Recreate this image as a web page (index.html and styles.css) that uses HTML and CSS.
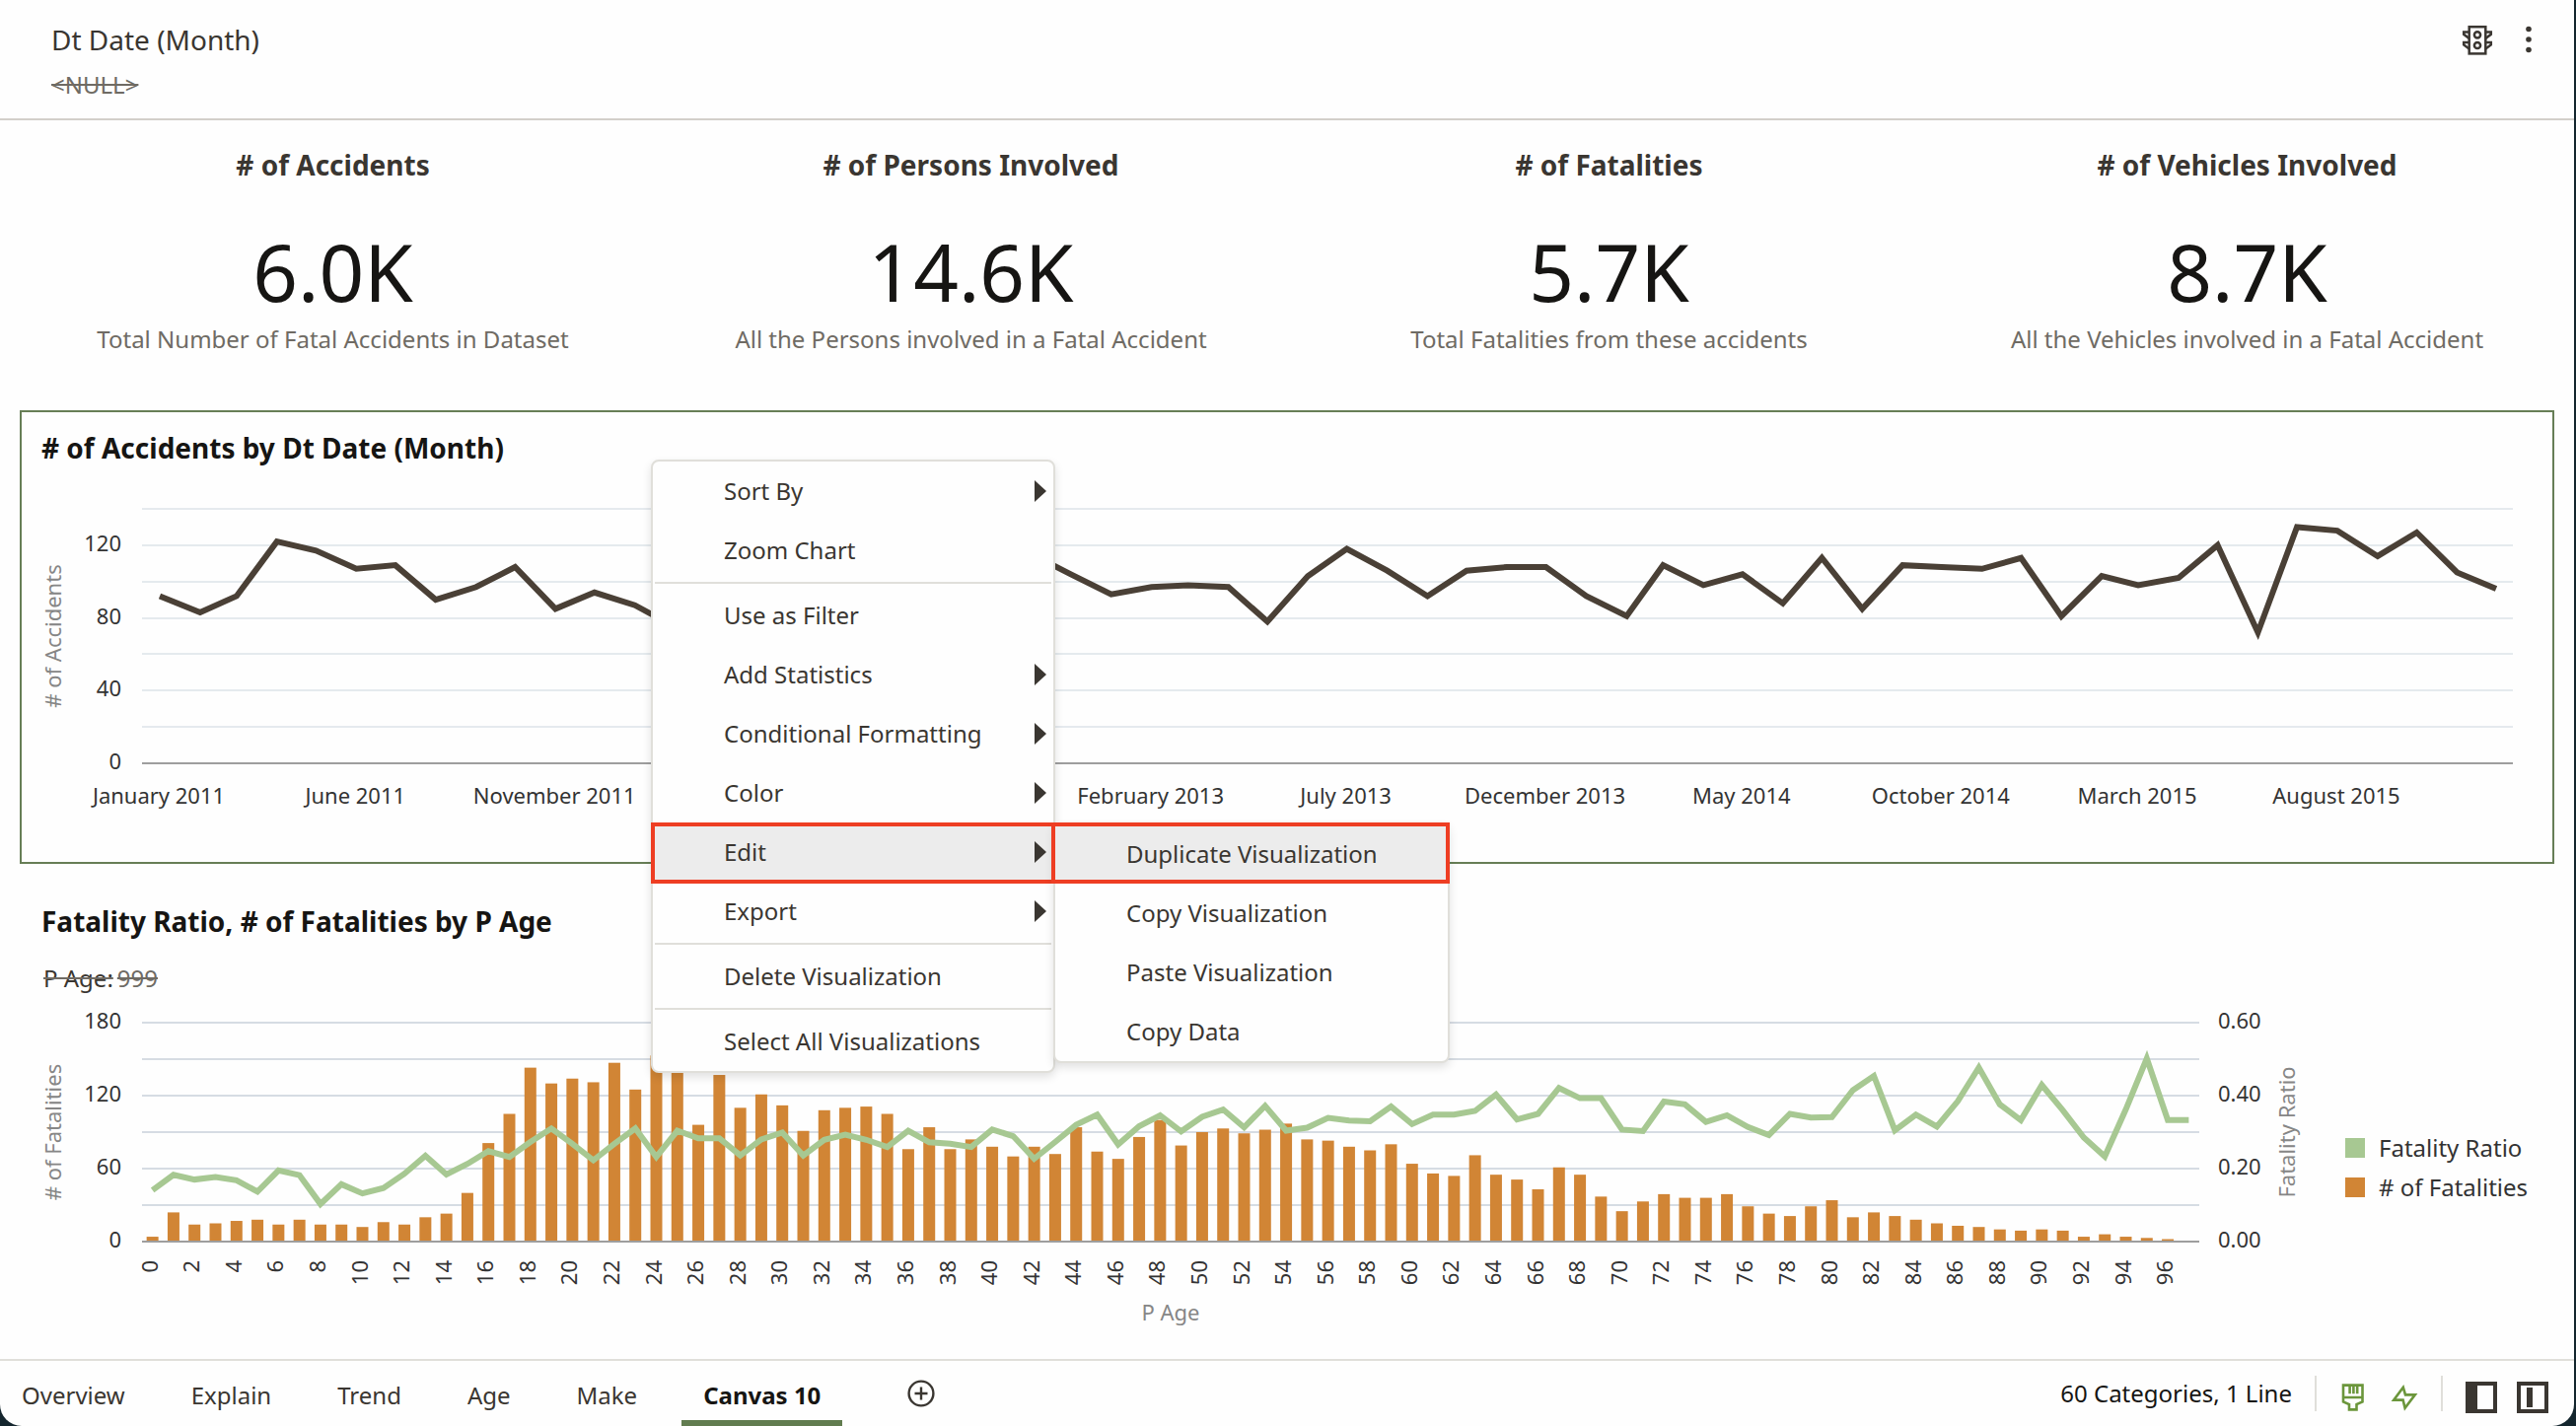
FILE: index.html
```html
<!DOCTYPE html>
<html lang="en">
<head>
<meta charset="utf-8">
<meta name="viewport" content="width=device-width, initial-scale=1">
<title>Fatal Accidents - Canvas 10</title>
<link rel="stylesheet" href="styles.css">
</head>
<body>
<div class="window">
  <header class="filter-bar">
    <div class="filter">
      <div class="filter-name">Dt Date (Month)</div>
      <div class="filter-value">&lt;NULL&gt;</div>
    </div>
    <div class="filter-actions">
      <button class="icon-button" type="button" aria-label="Limit values">
        <svg width="32" height="32" viewBox="0 0 32 32" fill="none" stroke="#3a3631" stroke-width="2.5">
          <rect x="7.7" y="3.2" width="16.6" height="27.2"/>
          <circle cx="16" cy="11.3" r="3.1"/>
          <circle cx="16" cy="22" r="3.1"/>
          <path d="M7.7 8.4H2.2v2.4l5.5 4.2M7.7 19H2.2v2.4l5.5 4.2M24.3 8.4h5.5v2.4l-5.5 4.2M24.3 19h5.5v2.4l-5.5 4.2"/>
        </svg>
      </button>
      <button class="icon-button" type="button" aria-label="Menu">
        <svg width="32" height="32" viewBox="0 0 32 32" fill="#3a3631">
          <circle cx="16" cy="5.5" r="2.8"/><circle cx="16" cy="16" r="2.8"/><circle cx="16" cy="26.5" r="2.8"/>
        </svg>
      </button>
    </div>
  </header>

  <main class="canvas">
    <section class="tiles">
      <article class="tile">
        <h2 class="tile-title"># of Accidents</h2>
        <div class="tile-value">6.0K</div>
        <p class="tile-note">Total Number of Fatal Accidents in Dataset</p>
      </article>
      <article class="tile">
        <h2 class="tile-title"># of Persons Involved</h2>
        <div class="tile-value">14.6K</div>
        <p class="tile-note">All the Persons involved in a Fatal Accident</p>
      </article>
      <article class="tile">
        <h2 class="tile-title"># of Fatalities</h2>
        <div class="tile-value">5.7K</div>
        <p class="tile-note">Total Fatalities from these accidents</p>
      </article>
      <article class="tile">
        <h2 class="tile-title"># of Vehicles Involved</h2>
        <div class="tile-value">8.7K</div>
        <p class="tile-note">All the Vehicles involved in a Fatal Accident</p>
      </article>
    </section>

    <section class="viz viz-selected">
      <h2 class="viz-title"># of Accidents by Dt Date (Month)</h2>
      <svg class="chart chart-accidents" id="accidents" role="img" aria-label="# of Accidents by Dt Date (Month)"></svg>
    </section>

    <section class="viz">
      <h2 class="viz-title">Fatality Ratio, # of Fatalities by P Age</h2>
      <div class="viz-filter"><span class="viz-filter-name">P Age:</span><span class="viz-filter-value">999</span></div>
      <div class="viz-body">
        <svg class="chart chart-fatalities" id="fatalities" role="img" aria-label="Fatality Ratio, # of Fatalities by P Age"></svg>
        <ul class="legend">
          <li class="legend-item"><span class="swatch swatch-ratio"></span>Fatality Ratio</li>
          <li class="legend-item"><span class="swatch swatch-count"></span># of Fatalities</li>
        </ul>
      </div>
    </section>
  </main>

  <footer class="status-bar">
    <nav class="tabs">
      <a class="tab" href="#overview">Overview</a>
      <a class="tab" href="#explain">Explain</a>
      <a class="tab" href="#trend">Trend</a>
      <a class="tab" href="#age">Age</a>
      <a class="tab" href="#make">Make</a>
      <a class="tab tab-active" href="#canvas10" aria-current="page">Canvas 10</a>
    </nav>
    <button class="icon-button add-canvas" type="button" aria-label="Add canvas">
      <svg width="28" height="28" viewBox="0 0 28 28" fill="none" stroke="#3a3631" stroke-width="2.4">
        <circle cx="14" cy="14" r="12.4"/><path d="M14 7.5v13M7.5 14h13"/>
      </svg>
    </button>
    <div class="status">
      <span class="status-text">60 Categories, 1 Line</span>
      <span class="divider"></span>
      <div class="status-icons status-icons-wide">
        <button class="icon-button" type="button" aria-label="Brushing">
          <svg width="28" height="28" viewBox="0 0 28 28" fill="none" stroke="#6b963b" stroke-width="2.6">
            <path d="M4 1.6h19.5v16.8l-6 2.6v5.4h-7.5v-5.4l-6-2.6zM4 14h19.5M10.6 1.6v8.6M14.4 1.6v8.6M18.2 1.6v8.6"/>
          </svg>
        </button>
        <button class="icon-button" type="button" aria-label="Auto apply data">
          <svg width="28" height="28" viewBox="0 0 28 28" fill="none" stroke="#6b963b" stroke-width="2.6" stroke-miterlimit="10">
            <path d="M12.8 3.8L3.2 16.6h9.4l2 8.2L24.8 11.4H15z"/>
          </svg>
        </button>
      </div>
      <span class="divider"></span>
      <div class="status-icons">
        <button class="icon-button" type="button" aria-label="Toggle data panel">
          <svg width="32" height="32" viewBox="0 0 32 32"><rect width="32" height="32" fill="#3a3631"/><rect x="12" y="4" width="16" height="24" fill="#fefefe"/></svg>
        </button>
        <button class="icon-button" type="button" aria-label="Toggle grammar panel">
          <svg width="32" height="32" viewBox="0 0 32 32"><rect width="32" height="32" fill="#3a3631"/><rect x="4" y="4" width="24" height="24" fill="#fefefe"/><rect x="10" y="6" width="6" height="20" fill="#3a3631"/></svg>
        </button>
      </div>
    </div>
  </footer>
</div>

<div class="menu context-menu" role="menu">
  <button class="menu-item has-submenu" type="button" role="menuitem">Sort By</button>
  <button class="menu-item" type="button" role="menuitem">Zoom Chart</button>
  <hr class="menu-separator">
  <button class="menu-item" type="button" role="menuitem">Use as Filter</button>
  <button class="menu-item has-submenu" type="button" role="menuitem">Add Statistics</button>
  <button class="menu-item has-submenu" type="button" role="menuitem">Conditional Formatting</button>
  <button class="menu-item has-submenu" type="button" role="menuitem">Color</button>
  <div class="menu-group">
    <button class="menu-item has-submenu is-active" type="button" role="menuitem" aria-expanded="true">Edit</button>
    <div class="menu submenu" role="menu">
      <button class="menu-item is-active" type="button" role="menuitem">Duplicate Visualization</button>
      <button class="menu-item" type="button" role="menuitem">Copy Visualization</button>
      <button class="menu-item" type="button" role="menuitem">Paste Visualization</button>
      <button class="menu-item" type="button" role="menuitem">Copy Data</button>
    </div>
  </div>
  <button class="menu-item has-submenu" type="button" role="menuitem">Export</button>
  <hr class="menu-separator">
  <button class="menu-item" type="button" role="menuitem">Delete Visualization</button>
  <hr class="menu-separator">
  <button class="menu-item" type="button" role="menuitem">Select All Visualizations</button>
</div>
<script src="charts.js"></script>
</body>
</html>
```
FILE: styles.css
```css
* {
  box-sizing: border-box;
}

body {
  margin: 0;
  background: #14262e;
  color: #3a3631;
  font-family: "Noto Sans", "Open Sans", sans-serif;
  font-size: 24px;
  line-height: 32px;
}

h2,
p,
ul {
  margin: 0;
  padding: 0;
}

.window {
  display: flex;
  flex-direction: column;
  min-height: 100vh;
  margin-right: 2px;
  overflow: hidden;
  border-radius: 0 0 22px 22px;
  background: #fefefe;
}

.icon-button {
  display: block;
  padding: 0;
  border: 0;
  background: none;
}

.icon-button svg {
  display: block;
}

/* Filter bar */

.filter-bar {
  display: flex;
  justify-content: space-between;
  padding: 22px 30px 18px 52px;
  border-bottom: 2px solid #d3cfca;
}

.filter {
  display: flex;
  flex-direction: column;
  gap: 12px;
}

.filter-name {
  font-size: 28px;
  line-height: 36px;
}

.filter-value {
  color: #6f6b64;
  text-decoration: line-through;
}

.filter-actions {
  display: flex;
  align-items: flex-start;
  gap: 20px;
  padding-top: 2px;
}

/* Canvas */

.canvas {
  flex: 1;
}

.tiles {
  display: grid;
  grid-template-columns: repeat(4, 1fr);
  padding: 27px 8px 56px 14px;
  text-align: center;
}

.tile-title {
  font-size: 28px;
  line-height: 36px;
}

.tile-value {
  margin-top: 42px;
  color: #161513;
  font-size: 80px;
  line-height: 96px;
}

.tile-note {
  margin-top: 5px;
  color: #6f6b64;
}

.viz {
  margin: 0 20px;
  padding-top: 38px;
  border: 2px solid transparent;
}

.viz-selected {
  padding-top: 18px;
  border-color: #677e56;
}

.viz-title {
  padding: 0 20px;
  color: #161513;
  font-size: 28px;
  line-height: 36px;
}

.viz-filter {
  display: flex;
  gap: 4px;
  margin-top: 24px;
  padding: 0 22px;
}

.viz-filter-name {
  text-decoration: line-through #6f6b64;
}

.viz-filter-value {
  color: #6f6b64;
  text-decoration: line-through;
}

.viz-body {
  display: flex;
  align-items: center;
  gap: 28px;
  padding-right: 22px;
}

/* Charts */

.chart {
  display: block;
  flex: 1;
  width: 100%;
  min-width: 0;
  font-size: 22px;
}

.chart-accidents {
  height: 402px;
}

.chart-fatalities {
  height: 352px;
}

.chart-accidents .grid {
  stroke: #e5eaee;
}

.chart-fatalities .grid {
  stroke: #d6dce3;
}

.grid,
.axis {
  stroke-width: 2;
}

.axis {
  stroke: #9e9e9e;
}

.tick {
  fill: #333333;
}

.axis-title {
  fill: #868686;
}

.series {
  fill: none;
  stroke-width: 6;
}

.series-accidents {
  stroke: #4a4036;
}

.series-ratio {
  stroke: #a7c892;
}

.bar {
  fill: #d18535;
}

.legend {
  flex: 0 0 188px;
  list-style: none;
  color: #333333;
}

.legend-item {
  display: flex;
  align-items: center;
  gap: 14px;
  line-height: 40px;
  white-space: nowrap;
}

.swatch {
  width: 20px;
  height: 20px;
}

.swatch-ratio {
  background: #a7c892;
}

.swatch-count {
  background: #d18535;
}

/* Status bar */

.status-bar {
  display: flex;
  align-items: center;
  height: 68px;
  padding-right: 26px;
  border-top: 2px solid #e0dfda;
}

.tabs {
  display: flex;
  align-self: stretch;
  gap: 23px;
}

.tab {
  padding: 19px 22px 0;
  border-bottom: 6px solid transparent;
  color: #3a3631;
  text-decoration: none;
}

.tab-active {
  border-bottom-color: #617c4f;
  color: #161513;
  font-weight: 700;
}

.add-canvas {
  margin-left: 66px;
}

.status {
  display: flex;
  align-items: center;
  gap: 23px;
  margin-left: auto;
  color: #161513;
}

.divider {
  width: 2px;
  height: 36px;
  background: #e0dfda;
}

.status-icons {
  display: flex;
  gap: 20px;
  padding-top: 8px;
}

.status-icons-wide {
  gap: 24px;
}

/* Context menu */

.menu {
  position: absolute;
  border: 2px solid #e0dfda;
  border-radius: 8px;
  background: #fefefe;
  box-shadow: 0 4px 10px rgba(0, 0, 0, 0.12);
}

.context-menu {
  top: 466px;
  left: 660px;
  width: 410px;
}

.menu-group {
  position: relative;
}

.submenu {
  top: 0;
  left: 100%;
  width: 402px;
}

.menu-item {
  position: relative;
  display: flex;
  align-items: center;
  justify-content: space-between;
  width: 100%;
  height: 60px;
  padding: 0 7px 0 72px;
  border: 0;
  background: none;
  color: #3a3631;
  font: inherit;
  text-align: left;
}

.has-submenu::after {
  border: solid transparent;
  border-width: 11px 0 11px 12px;
  border-left-color: #3a3631;
  content: "";
}

.menu-separator {
  height: 2px;
  margin: 2px;
  border: 0;
  background: #e0dfda;
}

.is-active {
  background: #ececec;
}

.is-active::before {
  position: absolute;
  inset: 0 -2px -2px;
  border: 4px solid #ee3e23;
  content: "";
}

.submenu .is-active::before {
  inset: -2px -2px 0 -4px;
}
```
FILE: charts.js
```js
const SVG_NS = "http://www.w3.org/2000/svg";

const accidents = [
  92, 83, 92, 122, 117, 107, 109, 90, 97, 108, 85, 94,
  87, 75, 88, 95, 104, 110, 102, 98, 105, 112, 115, 104,
  93, 97, 98, 97, 78, 103, 118, 106, 92, 106, 108, 108,
  92, 81, 109, 98, 104, 88, 113, 85, 109, 108, 107, 113,
  81, 103, 98, 102, 120, 72, 130, 128, 114, 127, 105, 96
];

const fatalities = [
  4, 24, 14, 15, 17, 18, 14, 18, 14, 14, 12, 16, 14, 20, 23, 40, 81, 105, 143, 130,
  134, 131, 147, 125, 153, 142, 96, 137, 110, 121, 112, 91, 108, 110, 111, 105, 76, 94, 76, 84,
  78, 70, 78, 72, 94, 74, 68, 86, 100, 79, 90, 93, 89, 92, 97, 84, 83, 78, 75, 80,
  64, 56, 54, 71, 55, 51, 43, 61, 55, 37, 25, 33, 39, 36, 36, 39, 29, 23, 21, 29,
  34, 20, 24, 21, 18, 15, 13, 12, 10, 9, 10, 9, 4, 6, 4, 3, 2, 0
];

const ratio = [
  0.141, 0.183, 0.170, 0.177, 0.168, 0.137, 0.195, 0.182, 0.103, 0.157,
  0.132, 0.147, 0.186, 0.235, 0.184, 0.213, 0.248, 0.232, 0.273, 0.310,
  0.268, 0.223, 0.268, 0.310, 0.232, 0.304, 0.283, 0.283, 0.236, 0.280,
  0.299, 0.236, 0.279, 0.293, 0.279, 0.259, 0.304, 0.272, 0.268, 0.259,
  0.307, 0.289, 0.227, 0.273, 0.320, 0.348, 0.266, 0.316, 0.346, 0.302,
  0.342, 0.362, 0.313, 0.372, 0.304, 0.312, 0.339, 0.332, 0.330, 0.370,
  0.322, 0.348, 0.348, 0.358, 0.403, 0.335, 0.350, 0.421, 0.393, 0.393,
  0.307, 0.303, 0.384, 0.376, 0.328, 0.346, 0.314, 0.292, 0.350, 0.340,
  0.341, 0.415, 0.454, 0.305, 0.348, 0.315, 0.385, 0.477, 0.376, 0.333,
  0.429, 0.360, 0.285, 0.233, 0.362, 0.502, 0.333, 0.333
];

// Month index (from January 2011) of each label on the date axis
const dateLabels = [
  [0, "January 2011"], [5, "June 2011"], [10, "November 2011"],
  [25, "February 2013"], [30, "July 2013"], [35, "December 2013"],
  [40, "May 2014"], [45, "October 2014"], [50, "March 2015"], [55, "August 2015"]
];

function add(parent, name, attributes, text) {
  const node = document.createElementNS(SVG_NS, name);
  for (const key in attributes) node.setAttribute(key, attributes[key]);
  if (text !== undefined) node.textContent = text;
  parent.appendChild(node);
}

function line(svg, x1, x2, y, cls) {
  add(svg, "line", { x1: x1, x2: x2, y1: y, y2: y, class: cls });
}

function verticalText(svg, x, y, anchor, cls, text) {
  add(svg, "text", { transform: `translate(${x} ${y}) rotate(-90)`, "text-anchor": anchor, class: cls }, text);
}

function drawAccidents() {
  const svg = document.getElementById("accidents");
  svg.replaceChildren();
  const left = 122, right = svg.clientWidth - 40, top = 44, bottom = 302;
  const y = v => bottom - v * (bottom - top) / 140;

  for (let v = 20; v <= 140; v += 20) line(svg, left, right, Math.round(y(v)), "grid");
  line(svg, left, right, bottom, "axis");
  for (let v = 0; v <= 120; v += 40) {
    add(svg, "text", { x: left - 21, y: Math.round(y(v)) + 6, "text-anchor": "end", class: "tick" }, v);
  }
  verticalText(svg, 40, (top + bottom) / 2, "middle", "axis-title", "# of Accidents");

  const start = Date.UTC(2011, 0, 1), end = Date.UTC(2015, 11, 1);
  const x = i => left + 18 + (Date.UTC(2011, i, 1) - start) / (end - start) * (right - left - 35);
  add(svg, "polyline", {
    points: accidents.map((v, i) => `${x(i)},${y(v)}`).join(" "),
    class: "series series-accidents"
  });
  for (const [i, label] of dateLabels) {
    add(svg, "text", { x: x(i) - 1, y: 343, "text-anchor": "middle", class: "tick" }, label);
  }
}

function drawFatalities() {
  const svg = document.getElementById("fatalities");
  svg.replaceChildren();
  const left = 122, right = svg.clientWidth - 120, top = 29, bottom = 251;
  const step = (right - left) / fatalities.length;
  const x = i => left + step * (i + 0.5);
  const y = v => bottom - v * (bottom - top) / 180;

  for (let v = 30; v <= 180; v += 30) line(svg, left, right, y(v), "grid");
  fatalities.forEach((v, i) => {
    add(svg, "rect", { x: x(i) - 6, y: y(v), width: 12, height: bottom - y(v), class: "bar" });
  });
  line(svg, left, right, bottom, "axis");
  add(svg, "polyline", {
    points: ratio.map((v, i) => `${x(i)},${y(v * 300)}`).join(" "),
    class: "series series-ratio"
  });

  for (let v = 0; v <= 180; v += 60) {
    add(svg, "text", { x: left - 21, y: y(v) + 6, "text-anchor": "end", class: "tick" }, v);
    add(svg, "text", { x: right + 19, y: y(v) + 6, class: "tick" }, (v / 300).toFixed(2));
  }
  for (let i = 0; i < fatalities.length; i += 2) {
    verticalText(svg, x(i) + 5, bottom + 19, "end", "tick", i);
  }
  verticalText(svg, 40, (top + bottom) / 2, "middle", "axis-title", "# of Fatalities");
  verticalText(svg, right + 97, (top + bottom) / 2, "middle", "axis-title", "Fatality Ratio");
  add(svg, "text", { x: (left + right) / 2, y: 331, "text-anchor": "middle", class: "axis-title" }, "P Age");
}

function draw() {
  drawAccidents();
  drawFatalities();
}

window.addEventListener("resize", draw);
draw();
```
